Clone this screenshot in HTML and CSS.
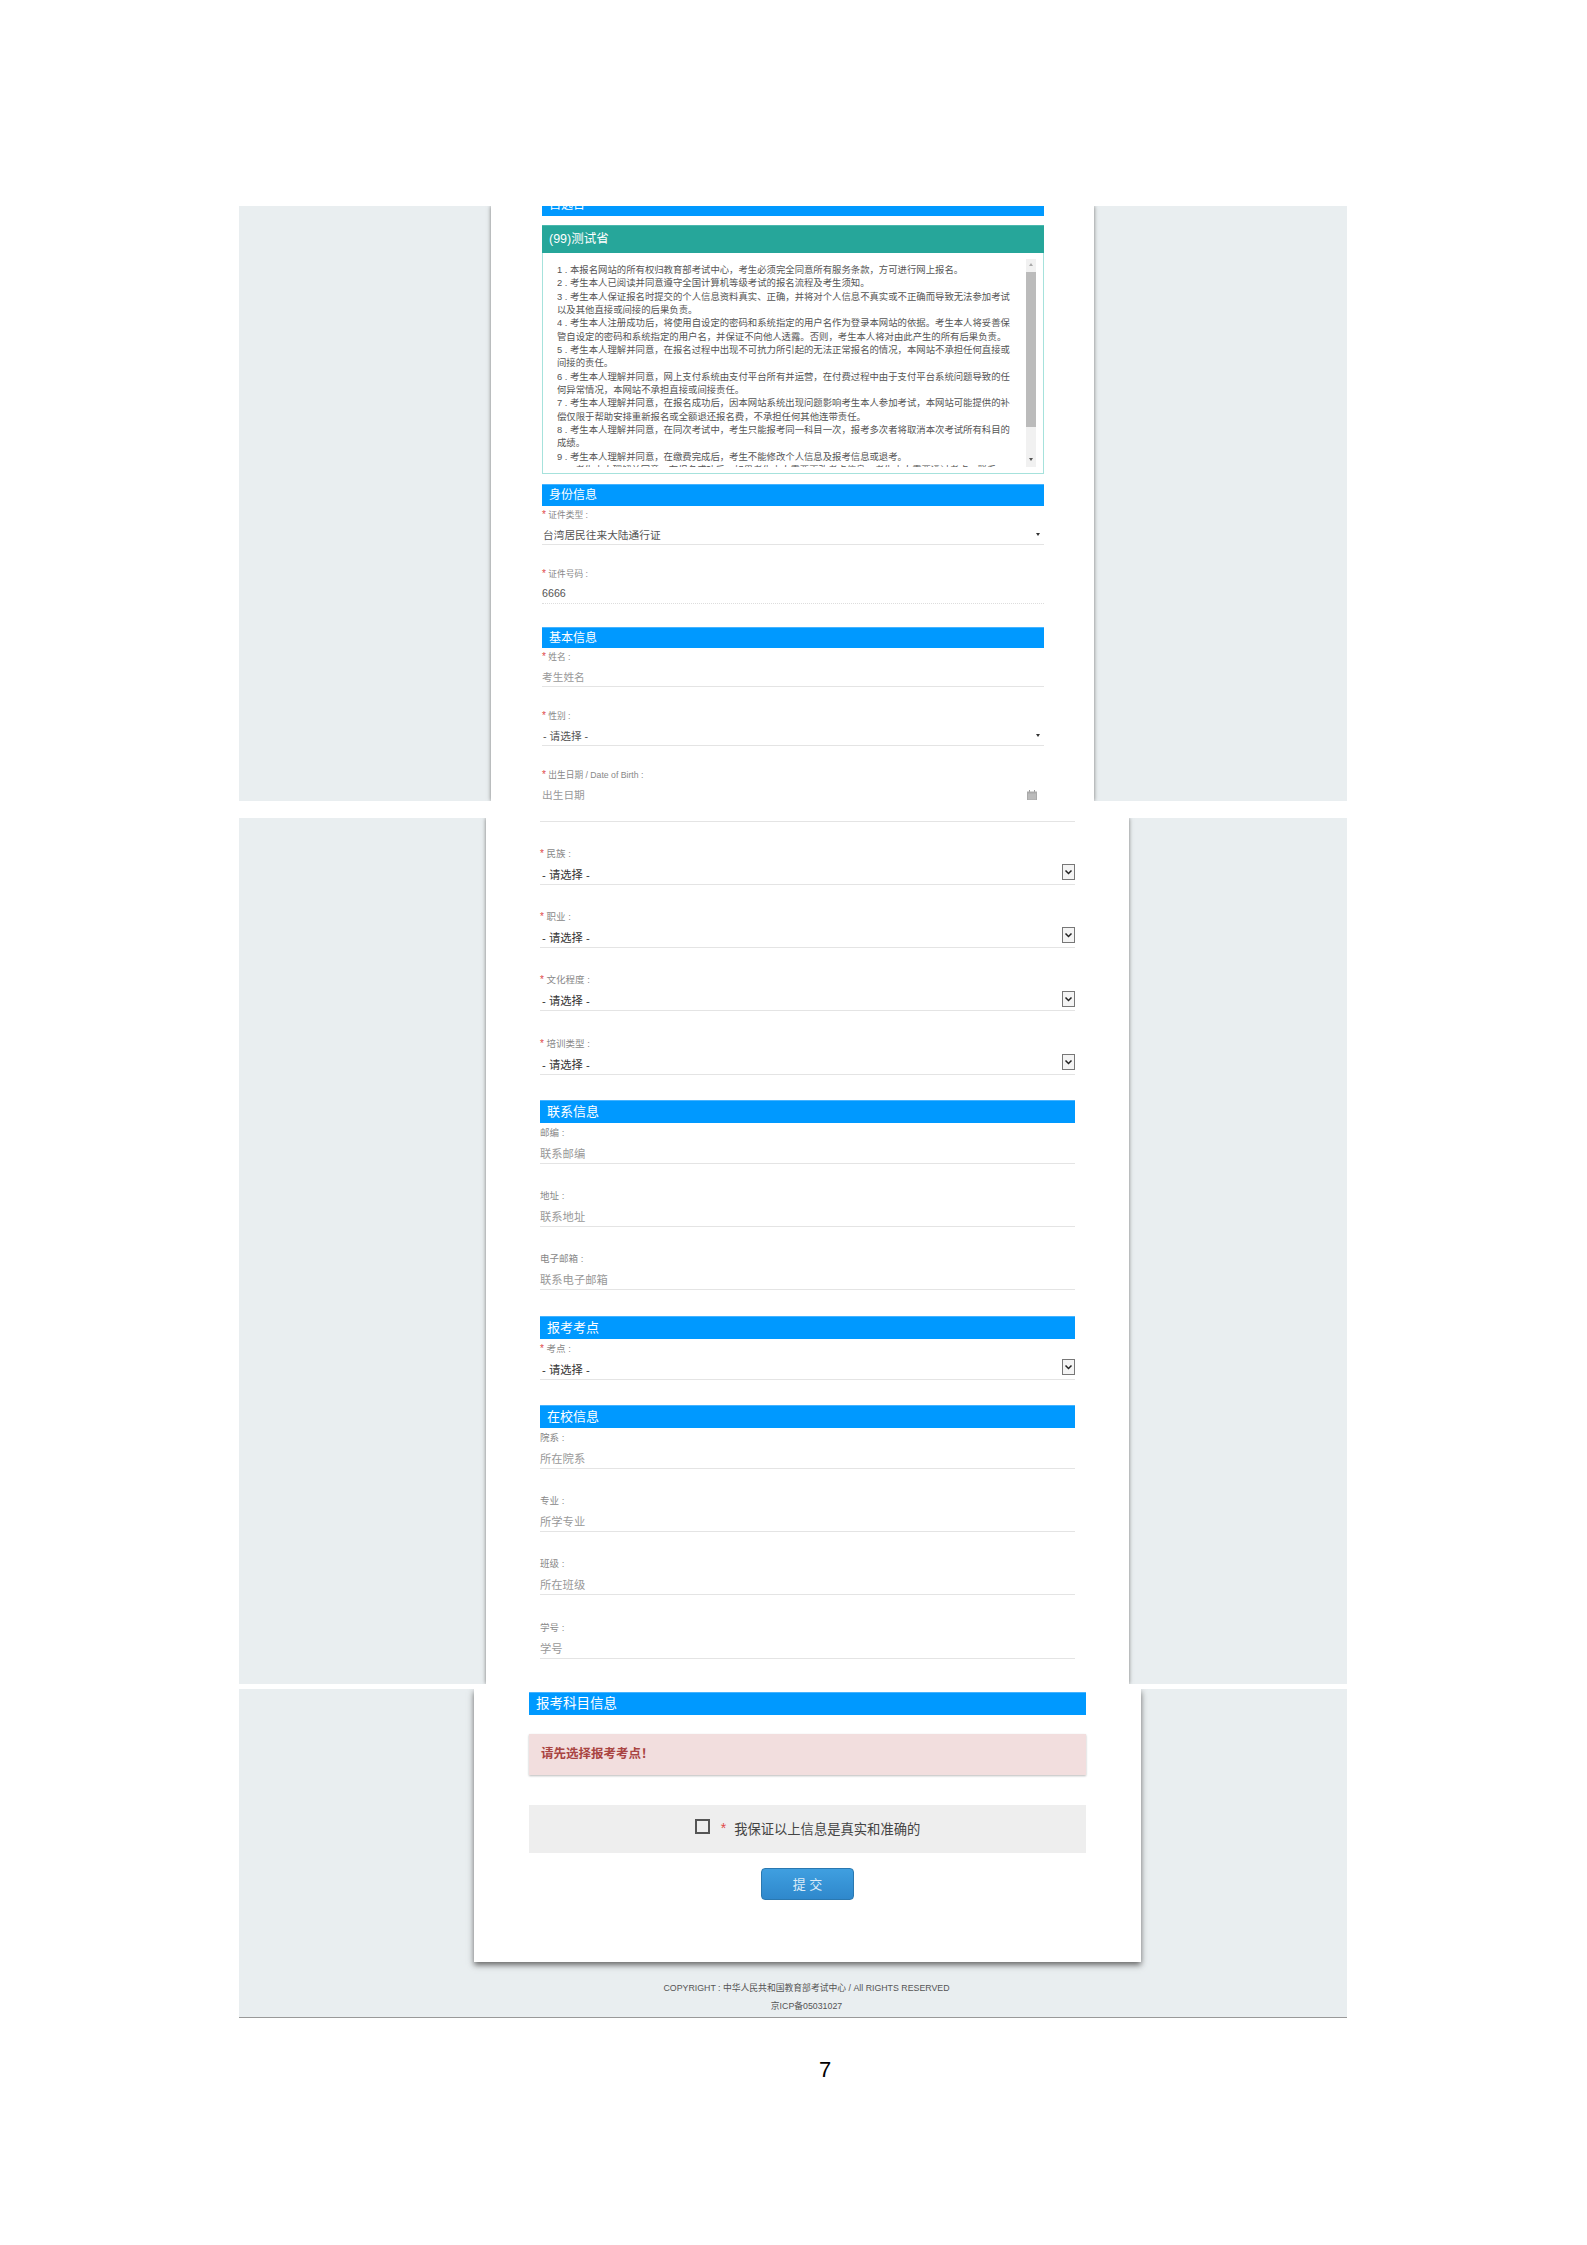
FILE: index.html
```html
<!DOCTYPE html>
<html lang="zh-CN">
<head>
  <meta charset="utf-8" />
  <title>报名信息</title>
  <link rel="stylesheet" href="styles.css">
</head>
<body>
<div class="sheet">

  <!-- first capture -->
  <div class="shot shot-a">
    <div class="card card-a">
      <div class="sec sec-cut"><span>自选日</span></div>

      <div class="terms">
        <div class="terms-head">(99)测试省</div>
        <div class="terms-body">
          <div class="terms-scroll">
            <div class="terms-text">
              1 . 本报名网站的所有权归教育部考试中心，考生必须完全同意所有服务条款，方可进行网上报名。<br>
              2 . 考生本人已阅读并同意遵守全国计算机等级考试的报名流程及考生须知。<br>
              3 . 考生本人保证报名时提交的个人信息资料真实、正确，并将对个人信息不真实或不正确而导致无法参加考试<br>
              以及其他直接或间接的后果负责。<br>
              4 . 考生本人注册成功后，将使用自设定的密码和系统指定的用户名作为登录本网站的依据。考生本人将妥善保<br>
              管自设定的密码和系统指定的用户名，并保证不向他人透露。否则，考生本人将对由此产生的所有后果负责。<br>
              5 . 考生本人理解并同意，在报名过程中出现不可抗力所引起的无法正常报名的情况，本网站不承担任何直接或<br>
              间接的责任。<br>
              6 . 考生本人理解并同意，网上支付系统由支付平台所有并运营，在付费过程中由于支付平台系统问题导致的任<br>
              何异常情况，本网站不承担直接或间接责任。<br>
              7 . 考生本人理解并同意，在报名成功后，因本网站系统出现问题影响考生本人参加考试，本网站可能提供的补<br>
              偿仅限于帮助安排重新报名或全额退还报名费，不承担任何其他连带责任。<br>
              8 . 考生本人理解并同意，在同次考试中，考生只能报考同一科目一次，报考多次者将取消本次考试所有科目的<br>
              成绩。<br>
              9 . 考生本人理解并同意，在缴费完成后，考生不能修改个人信息及报考信息或退考。<br>
              10 . 考生本人理解并同意，在报名成功后，如果考生本人需要更改考点信息，考生本人需要通过考点，联系
            </div>
          </div>
          <div class="scrollbar">
            <span class="sb-up"></span>
            <span class="sb-thumb"></span>
            <span class="sb-down"></span>
          </div>
        </div>
      </div>

      <div class="sec sec-a">身份信息</div>
      <div class="field-a">
        <div class="lab"><i>*</i> 证件类型 :</div>
        <div class="val sel-a">台湾居民往来大陆通行证<span class="tri"></span></div>
      </div>
      <div class="field-a">
        <div class="lab"><i>*</i> 证件号码 :</div>
        <div class="val num dotted">6666</div>
      </div>

      <div class="sec sec-a gap-a">基本信息</div>
      <div class="field-a">
        <div class="lab"><i>*</i> 姓名 :</div>
        <div class="val ph">考生姓名</div>
      </div>
      <div class="field-a">
        <div class="lab"><i>*</i> 性别 :</div>
        <div class="val sel-a">- 请选择 -<span class="tri"></span></div>
      </div>
      <div class="field-a">
        <div class="lab"><i>*</i> 出生日期 / Date of Birth :</div>
        <div class="val ph date">出生日期
          <svg class="cal" viewBox="0 0 10 10" width="10" height="10">
            <path d="M2 0h1v2H2zM7 0h1v2H7z" fill="#999"/>
            <path d="M0 1.5h10V10H0z" fill="#aaa"/>
            <path d="M2 3.5v6M4 3.5v6M6 3.5v6M8 3.5v6" stroke="#ddd" stroke-width=".7"/>
          </svg>
        </div>
      </div>
    </div>
  </div>

  <!-- second capture -->
  <div class="shot shot-b">
    <div class="card card-b">
      <div class="rule-top"></div>

      <div class="field-b">
        <div class="lab"><i>*</i> 民族 :</div>
        <div class="val sel">- 请选择 -<svg class="arrow" viewBox="0 0 13 16" width="13" height="16"><rect x=".5" y=".5" width="12" height="15" fill="#f4f4f4" stroke="#777"/><path d="M3.5 6.5l3 3 3-3" fill="none" stroke="#222" stroke-width="1.5"/></svg></div>
      </div>
      <div class="field-b">
        <div class="lab"><i>*</i> 职业 :</div>
        <div class="val sel">- 请选择 -<svg class="arrow" viewBox="0 0 13 16" width="13" height="16"><rect x=".5" y=".5" width="12" height="15" fill="#f4f4f4" stroke="#777"/><path d="M3.5 6.5l3 3 3-3" fill="none" stroke="#222" stroke-width="1.5"/></svg></div>
      </div>
      <div class="field-b">
        <div class="lab"><i>*</i> 文化程度 :</div>
        <div class="val sel">- 请选择 -<svg class="arrow" viewBox="0 0 13 16" width="13" height="16"><rect x=".5" y=".5" width="12" height="15" fill="#f4f4f4" stroke="#777"/><path d="M3.5 6.5l3 3 3-3" fill="none" stroke="#222" stroke-width="1.5"/></svg></div>
      </div>
      <div class="field-b">
        <div class="lab"><i>*</i> 培训类型 :</div>
        <div class="val sel">- 请选择 -<svg class="arrow" viewBox="0 0 13 16" width="13" height="16"><rect x=".5" y=".5" width="12" height="15" fill="#f4f4f4" stroke="#777"/><path d="M3.5 6.5l3 3 3-3" fill="none" stroke="#222" stroke-width="1.5"/></svg></div>
      </div>

      <div class="sec sec-b">联系信息</div>
      <div class="field-b">
        <div class="lab">邮编 :</div>
        <div class="val ph">联系邮编</div>
      </div>
      <div class="field-b">
        <div class="lab">地址 :</div>
        <div class="val ph">联系地址</div>
      </div>
      <div class="field-b">
        <div class="lab">电子邮箱 :</div>
        <div class="val ph">联系电子邮箱</div>
      </div>

      <div class="sec sec-b">报考考点</div>
      <div class="field-b">
        <div class="lab"><i>*</i> 考点 :</div>
        <div class="val sel">- 请选择 -<svg class="arrow" viewBox="0 0 13 16" width="13" height="16"><rect x=".5" y=".5" width="12" height="15" fill="#f4f4f4" stroke="#777"/><path d="M3.5 6.5l3 3 3-3" fill="none" stroke="#222" stroke-width="1.5"/></svg></div>
      </div>

      <div class="sec sec-b">在校信息</div>
      <div class="field-b">
        <div class="lab">院系 :</div>
        <div class="val ph">所在院系</div>
      </div>
      <div class="field-b">
        <div class="lab">专业 :</div>
        <div class="val ph">所学专业</div>
      </div>
      <div class="field-b">
        <div class="lab">班级 :</div>
        <div class="val ph">所在班级</div>
      </div>
      <div class="field-b">
        <div class="lab">学号 :</div>
        <div class="val ph">学号</div>
      </div>
    </div>
  </div>

  <!-- third capture -->
  <div class="shot shot-c">
    <div class="card card-c">
      <div class="sec sec-c">报考科目信息</div>
      <div class="alert">请先选择报考考点！</div>
      <div class="confirm">
        <span class="check"></span>
        <i>*</i>
        <span>我保证以上信息是真实和准确的</span>
      </div>
      <button class="submit" type="button">提 交</button>
    </div>
    <div class="foot">
      <div>COPYRIGHT : 中华人民共和国教育部考试中心 / All RIGHTS RESERVED</div>
      <div>京ICP备05031027</div>
    </div>
  </div>

</div>
<div class="page-no">7</div>
</body>
</html>
```

FILE: styles.css
```css
:root {
  --blue: #0099ff;
  --teal: #26a69a;
  --bg: #e9eef0;
  --line: #e4e4e4;
}
* { box-sizing: border-box; margin: 0; padding: 0; }
body {
  font-family: "Liberation Sans", "Noto Sans CJK SC", sans-serif;
  background: #fff;
  color: #555;
}
i { font-style: normal; color: #e04848; font-size: 10px; line-height: 1; }

.sheet { width: 1108px; margin: 0 0 0 239px; padding-top: 206px; }

.shot { background: var(--bg); overflow: hidden; }
.shot-a { height: 595px; margin-bottom: 17px; }
.shot-b { height: 866px; margin-bottom: 5px; }
.shot-c { height: 329px; border-bottom: 1px solid #999; }

.card { background: #fff; box-shadow: 0 0 4px #777; }
.card-a { width: 603px; margin-left: 252px; height: 100%; padding: 0 50px 0 51px; }
.card-b { width: 642.5px; margin-left: 247px; height: 100%; padding: 3px 54px 0 54px; }
.card-c {
  width: 667px; height: 273px; margin-left: 235px;
  padding: 3px 55px 0 55px;
  box-shadow: 0 3px 6px #666;
}

/* section bars */
.sec {
  background: var(--blue);
  border-top: 1px solid #45b3ff;
  color: #fff;
  padding-left: 7px;
}
.sec-cut {
  height: 9.5px; border-top: 0;
  display: flex; align-items: flex-end; overflow: hidden;
  font-size: 12px; line-height: 21px;
}
.sec-a { height: 21.5px; font-size: 12px; line-height: 20px; }
.gap-a { margin-top: 23px; }
.sec-b { height: 23px; font-size: 13px; line-height: 22px; margin-top: 25.2px; }
.sec-c { height: 23px; font-size: 13.5px; line-height: 22px; }

/* terms box */
.terms { margin-top: 9.5px; margin-bottom: 10px; }
.terms-head {
  background: var(--teal);
  border-top: 1px solid #4bb8ad;
  height: 28px;
  color: #fff;
  font-size: 12.5px; line-height: 26px;
  padding-left: 7px;
}
.terms-body {
  border: 1px solid #a6e2dc; border-top: 0;
  height: 221px;
  padding: 6px 7px 6px 14px;
  display: flex;
}
.terms-scroll { flex: 1; overflow: hidden; height: 208px; }
.terms-text {
  font-size: 9.37px; line-height: 13.33px;
  white-space: nowrap; color: #555;
  padding-top: 5px;
}
.scrollbar {
  width: 10px; height: 208px;
  background: #f1f1f1;
  display: flex; flex-direction: column; align-items: center;
}
.sb-thumb { width: 100%; height: 155px; background: #bbb; margin: 6px 0 auto; }
.sb-up, .sb-down { width: 0; height: 0; border: 2px solid transparent; }
.sb-up { border-bottom: 3px solid #aaa; border-top: 0; margin-top: 4px; }
.sb-down { border-top: 3px solid #555; border-bottom: 0; margin-bottom: 6px; }

/* form rows */
.lab { color: #888; font-size: 8.7px; line-height: 19px; height: 19px; }
.val {
  display: flex; align-items: center;
  border-bottom: 1px solid var(--line);
  color: #555;
}
.ph { color: #999; }
.field-a { margin-bottom: 20px; }
.field-a .val { height: 20px; font-size: 10.7px; }
.field-a:last-child { margin-bottom: 0; }
.sel-a { padding-left: 1px; justify-content: space-between; }
.tri {
  width: 0; height: 0; margin-right: 4px;
  border: 2px solid transparent; border-top: 3px solid #333; border-bottom: 0;
}
.num { font-size: 11px; }
.dotted { border-bottom: 1px dotted #ddd; }
.date { justify-content: space-between; }
.cal { margin-right: 7px; }

.rule-top { border-top: 1px solid var(--line); margin-bottom: 21.7px; }
.field-b { margin-bottom: 22.3px; }
.field-b .lab { font-size: 9.5px; line-height: 20px; height: 20px; }
.field-b .val { height: 21px; font-size: 11.3px; }
.sel { justify-content: space-between; padding-left: 2px; color: #333; }
.field-b .sel { color: #333; }
.arrow { margin-bottom: 3px; }
.field-b:has(+ .sec-b) { margin-bottom: 0; }

/* bottom capture */
.alert {
  margin-top: 19px; height: 41px;
  background: #f2dede;
  box-shadow: 0 1px 2px #bbb;
  color: #a94442;
  font-size: 12.5px; font-weight: bold; line-height: 41px;
  padding-left: 12px;
}
.confirm {
  margin-top: 30px; height: 48px;
  padding-bottom: 2px;
  background: #eee;
  display: flex; align-items: center; justify-content: center;
  gap: 8px;
  color: #444;
  font-size: 13.3px;
}
.check { width: 15px; height: 15px; border: 2px solid #555; margin-top: -4px; margin-right: 3px; }
.confirm i { font-size: 14px; }
.submit {
  display: block;
  width: 93px; height: 32px;
  margin: 15px auto 0;
  padding-bottom: 2px;
  border: 1px solid #2a78b0;
  border-radius: 4px;
  background: linear-gradient(#3f9fe0, #2f88cc);
  color: #dcecf8;
  font-family: inherit;
  font-size: 13px;
}
.foot {
  padding: 18px 0 0 27px;
  text-align: center;
  color: #555;
  font-size: 8.8px;
  line-height: 17.7px;
}

.page-no {
  margin-top: 38px;
  padding-left: 63px;
  text-align: center;
  font-size: 22px;
  line-height: 28px;
  color: #000;
}
```
